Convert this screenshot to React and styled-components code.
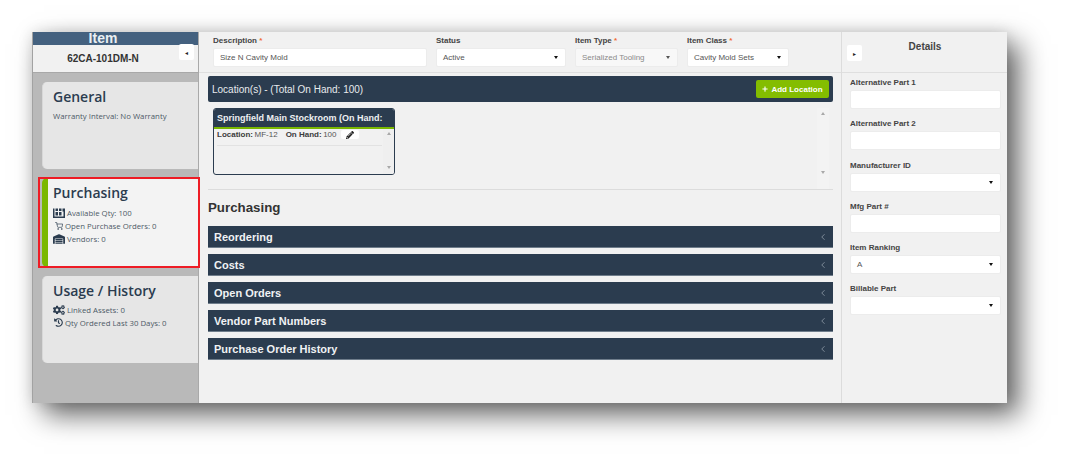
import React from 'react';
import styled, { createGlobalStyle } from 'styled-components';
import { FaCogs, FaHistory, FaPencilAlt, FaPlus, FaWarehouse } from 'react-icons/fa';
import { FiShoppingCart, FiChevronLeft } from 'react-icons/fi';

const GlobalStyle = createGlobalStyle`
  html, body {
    margin: 0;
    background: #fff;
    font-family: "Liberation Sans", Arial, sans-serif;
  }
  * { box-sizing: border-box; }
`;

const Page = styled.div`
  width: 1072px;
  height: 468px;
  padding: 32px 65px 65px 32px;
  overflow: hidden;
`;

const Window = styled.div`
  display: flex;
  width: 975px;
  height: 371px;
  background: #f1f1f1;
  box-shadow: 12px 12px 26px rgba(0, 0, 0, 0.6), 0 0 14px rgba(0, 0, 0, 0.12);
`;

const Sidebar = styled.aside`
  display: flex;
  flex-direction: column;
  flex: 0 0 167px;
  background: #b9b9b9;
  border-left: 1px solid #a2a2a2;
  border-right: 1px solid #a9a9a9;
`;

const TitleBar = styled.div`
  height: 13px;
  padding-right: 25px;
  background: #44617f;
  color: #e9eef2;
  font-size: 14px;
  font-weight: 700;
  line-height: 12px;
  text-align: center;
`;

const ItemRow = styled.div`
  display: flex;
  align-items: flex-start;
  height: 28px;
  background: #f1f1f1;
  border-bottom: 1px solid #a8a8a8;
`;

const ItemId = styled.div`
  flex: 1;
  padding-top: 8px;
  padding-right: 6px;
  color: #333;
  font-size: 10px;
  font-weight: 700;
  text-align: center;
`;

const ToggleButton = styled.div`
  display: flex;
  align-items: center;
  justify-content: center;
  flex: 0 0 15px;
  width: 15px;
  height: 16px;
  background: #fff;
  border-radius: 2px;
  color: #222;
  font-size: 6px;
  margin: ${(p) => p.$margin};
`;

const CardList = styled.div`
  display: flex;
  flex-direction: column;
  gap: 9px;
  padding: 9px 0 0 9px;
`;

const NavCard = styled.div`
  position: relative;
  height: ${(p) => (p.$active ? 89 : 87)}px;
  padding: 5px 0 0 ${(p) => (p.$active ? 5 : 10)}px;
  background: ${(p) => (p.$active ? '#f3f3f3' : '#e6e6e6')};
  border-radius: 5px 0 0 5px;
  border-left: ${(p) => (p.$active ? '6px solid #7ab800' : '1px solid #d8d8d8')};
  font-family: "Open Sans", sans-serif;
  color: #2b3c4f;
`;

// red call-out drawn over the selected card
const Highlight = styled.div`
  position: absolute;
  top: -1px;
  left: -10px;
  right: -2px;
  bottom: -1px;
  z-index: 1;
  border: 2px solid #ee1c25;
`;

const CardTitle = styled.h2`
  margin: 0 0 ${(p) => (p.$roomy ? 4 : 3)}px;
  font-size: 14px;
  font-weight: 600;
  line-height: 19px;
`;

const CardLine = styled.div`
  display: flex;
  align-items: center;
  gap: 2px;
  height: 13px;
  color: #4d5a67;
  font-size: 7.8px;
  white-space: nowrap;
  svg { flex: none; color: #2b3c4f; }
`;

const Main = styled.main`
  display: flex;
  flex-direction: column;
  flex: 0 0 643px;
  border-right: 1px solid #dcdcdc;
`;

const TopForm = styled.div`
  display: flex;
  gap: 9px;
  height: 41px;
  padding: 4px 0 0 14px;
  border-bottom: 1px solid #dfdfdf;
`;

const Field = styled.div`
  flex: 0 0 ${(p) => p.$width}px;
`;

const Label = styled.div`
  height: 11px;
  margin-bottom: 1px;
  color: #444;
  font-size: 8px;
  font-weight: 700;
  line-height: 9px;
  span { color: #f26b38; }
`;

const InputBox = styled.div`
  display: flex;
  align-items: center;
  height: 19px;
  padding: 0 7px 0 6px;
  background: ${(p) => (p.$disabled ? '#f8f8f8' : '#fff')};
  border: 1px solid #ececec;
  border-radius: 2px;
  color: ${(p) => (p.$disabled ? '#8a8a8a' : '#555')};
  font-size: 8px;
`;

const Caret = styled.i`
  width: 0;
  height: 0;
  margin-left: auto;
  border-left: 2.5px solid transparent;
  border-right: 2.5px solid transparent;
  border-top: 3px solid ${(p) => (p.$disabled ? '#555' : '#111')};
`;

const Content = styled.div`
  display: flex;
  flex-direction: column;
  padding: 3px 8px 0 9px;
`;

const LocationHeader = styled.div`
  display: flex;
  align-items: center;
  justify-content: space-between;
  height: 26px;
  padding: 0 4px 0 4px;
  background: #2b3c4f;
  border-radius: 2px;
  color: #e8ebee;
  font-size: 10px;
`;

const AddButton = styled.div`
  display: flex;
  align-items: center;
  justify-content: center;
  gap: 3px;
  width: 73px;
  height: 18px;
  background: #84bd00;
  border-radius: 2px;
  color: #fff;
  font-size: 8px;
  font-weight: 700;
`;

const LocationArea = styled.div`
  display: flex;
  justify-content: space-between;
  height: 88px;
  padding: 6px 4px 0 5px;
  border-bottom: 1px solid #dcdcdc;
`;

const LocationCard = styled.div`
  display: flex;
  flex-direction: column;
  width: 182px;
  height: 67px;
  border: 1px solid #2b3c4f;
  border-radius: 3px;
  overflow: hidden;
`;

const LocationTitle = styled.div`
  flex: none;
  height: 20px;
  padding: 4px 3px 0;
  background: #2b3c4f;
  border-bottom: 2px solid #7ab800;
  color: #eef0f2;
  font-size: 9px;
  font-weight: 700;
  line-height: 11px;
  white-space: nowrap;
`;

const LocationBody = styled.div`
  display: flex;
  flex: 1;
`;

const LocationRows = styled.div`
  flex: 1;
`;

const LocationRow = styled.div`
  display: flex;
  align-items: center;
  height: 17px;
  margin: 0 1px 0 3px;
  padding-bottom: 5px;
  border-bottom: 1px solid #e2e2e2;
  color: #555;
  font-size: 8px;
`;

const RowLabel = styled.b`
  margin: 0 1.5px 0 ${(p) => p.$gap || 0}px;
  color: #3b3b3b;
`;

const PencilButton = styled.div`
  display: flex;
  align-items: center;
  justify-content: center;
  width: 18px;
  height: 9px;
  margin-left: 5px;
  background: #fff;
  border-radius: 2px;
  color: #222;
`;

const ScrollColumn = styled.div`
  display: flex;
  flex-direction: column;
  align-items: center;
  justify-content: space-between;
  flex: 0 0 ${(p) => p.$width}px;
  padding: ${(p) => p.$padding};
  background: ${(p) => p.$bg || 'transparent'};
`;

const ScrollArrow = styled.i`
  width: 0;
  height: 0;
  border-left: 2px solid transparent;
  border-right: 2px solid transparent;
  ${(p) => (p.$down ? 'border-top' : 'border-bottom')}: 3px solid #a8a8a8;
`;

const SectionTitle = styled.h3`
  margin: 10px 0 10px;
  color: #333;
  font-size: 13.3px;
  font-weight: 700;
  line-height: 16px;
`;

const Accordion = styled.div`
  display: flex;
  flex-direction: column;
  gap: 6px;
`;

const AccordionRow = styled.div`
  display: flex;
  align-items: center;
  justify-content: space-between;
  height: 22px;
  padding: 0 5px 0 6px;
  background: #2b3c4f;
  border-bottom: 1px solid #6f7d8b;
  color: #f0f2f4;
  font-size: 11px;
  font-weight: 700;
  svg { color: #8b98a5; }
`;

const Details = styled.section`
  display: flex;
  flex-direction: column;
  flex: 1;
`;

const DetailsHeader = styled.div`
  display: flex;
  height: 41px;
  border-bottom: 1px solid #dfdfdf;
`;

const DetailsTitle = styled.div`
  flex: 1;
  padding: 9px 19px 0 0;
  color: #444;
  font-size: 10px;
  font-weight: 700;
  text-align: center;
`;

const DetailsFields = styled.div`
  display: flex;
  flex-direction: column;
  gap: 10.3px;
  padding: 5px 6px 0 8px;
`;

const WarehouseBoxes = () => (
  <svg width="12" height="10" viewBox="0 0 24 20" fill="currentColor">
    <path d="M0 1h3v16h18V7h-2V1h5v19H0z" />
    <path d="M5 1h5v5H5zM12 1h5v5h-5zM5 8h5v7H5zM12 8h5v7h-5z" />
  </svg>
);

const SelectField = ({ label, value, required, disabled, width }) => (
  <Field $width={width}>
    <Label>
      {label}
      {required && <span> *</span>}
    </Label>
    <InputBox $disabled={disabled}>
      {value}
      <Caret $disabled={disabled} />
    </InputBox>
  </Field>
);

const sections = ['Reordering', 'Costs', 'Open Orders', 'Vendor Part Numbers', 'Purchase Order History'];

export default function App() {
  return (
    <Page>
      <GlobalStyle />
      <Window>
        <Sidebar>
          <TitleBar>Item</TitleBar>
          <ItemRow>
            <ItemId>62CA-101DM-N</ItemId>
            <ToggleButton $margin="-1px 4px 0 0">◂</ToggleButton>
          </ItemRow>
          <CardList>
            <NavCard>
              <CardTitle>General</CardTitle>
              <CardLine>Warranty Interval: No Warranty</CardLine>
            </NavCard>
            <NavCard $active>
              <Highlight />
              <CardTitle $roomy>Purchasing</CardTitle>
              <CardLine><WarehouseBoxes /> Available Qty: 100</CardLine>
              <CardLine><FiShoppingCart size={8} style={{ marginLeft: 2 }} /> Open Purchase Orders: 0</CardLine>
              <CardLine><FaWarehouse size={12} /> Vendors: 0</CardLine>
            </NavCard>
            <NavCard>
              <CardTitle>Usage / History</CardTitle>
              <CardLine><FaCogs size={12} /> Linked Assets: 0</CardLine>
              <CardLine><FaHistory size={9} style={{ marginLeft: 1 }} /> Qty Ordered Last 30 Days: 0</CardLine>
            </NavCard>
          </CardList>
        </Sidebar>

        <Main>
          <TopForm>
            <Field $width={214}>
              <Label>Description<span> *</span></Label>
              <InputBox>Size N Cavity Mold</InputBox>
            </Field>
            <SelectField width={130} label="Status" value="Active" />
            <SelectField width={103} label="Item Type" value="Serialized Tooling" required disabled />
            <SelectField width={102} label="Item Class" value="Cavity Mold Sets" required />
          </TopForm>
          <Content>
            <LocationHeader>
              Location(s) - (Total On Hand: 100)
              <AddButton><FaPlus size={6} /> Add Location</AddButton>
            </LocationHeader>
            <LocationArea>
              <LocationCard>
                <LocationTitle>Springfield Main Stockroom (On Hand:</LocationTitle>
                <LocationBody>
                  <LocationRows>
                    <LocationRow>
                      <RowLabel>Location:</RowLabel>
                      <span>MF-12</span>
                      <RowLabel $gap={8}>On Hand:</RowLabel>
                      <span>100</span>
                      <PencilButton><FaPencilAlt size={8} /></PencilButton>
                    </LocationRow>
                  </LocationRows>
                  <ScrollColumn $width={11} $padding="3px 0 5px" $bg="#efefef">
                    <ScrollArrow />
                    <ScrollArrow $down />
                  </ScrollColumn>
                </LocationBody>
              </LocationCard>
              <ScrollColumn $width={12} $padding="4px 0 15px" $bg="#f3f3f3">
                <ScrollArrow />
                <ScrollArrow $down />
              </ScrollColumn>
            </LocationArea>
            <SectionTitle>Purchasing</SectionTitle>
            <Accordion>
              {sections.map((name) => (
                <AccordionRow key={name}>
                  {name}
                  <FiChevronLeft size={10} />
                </AccordionRow>
              ))}
            </Accordion>
          </Content>
        </Main>

        <Details>
          <DetailsHeader>
            <ToggleButton $margin="13px 0 0 5px">▸</ToggleButton>
            <DetailsTitle>Details</DetailsTitle>
          </DetailsHeader>
          <DetailsFields>
            <Field>
              <Label>Alternative Part 1</Label>
              <InputBox />
            </Field>
            <Field>
              <Label>Alternative Part 2</Label>
              <InputBox />
            </Field>
            <SelectField label="Manufacturer ID" />
            <Field>
              <Label>Mfg Part #</Label>
              <InputBox />
            </Field>
            <SelectField label="Item Ranking" value="A" />
            <SelectField label="Billable Part" />
          </DetailsFields>
        </Details>
      </Window>
    </Page>
  );
}
